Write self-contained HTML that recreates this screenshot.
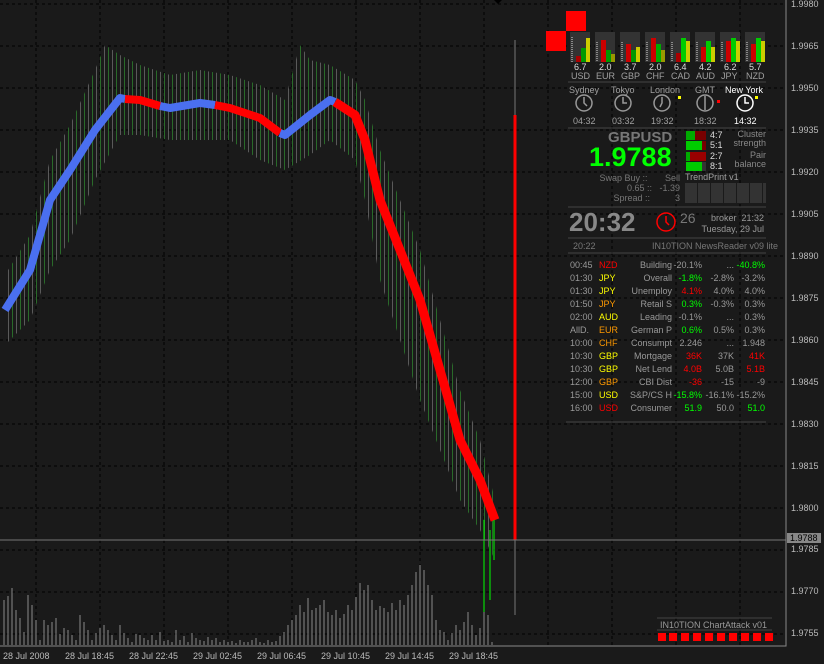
<!DOCTYPE html><html><head><meta charset="utf-8"><style>
body{margin:0;background:#1a1a1a;width:824px;height:664px;overflow:hidden;position:relative;font-family:"Liberation Sans",sans-serif;}
svg{position:absolute;left:0;top:0}
.t{position:absolute;font-size:9px;color:#a0a0a0;white-space:nowrap;line-height:10px}
.r{text-align:right}
</style></head><body>
<svg width="824" height="664">
<defs>
<pattern id="vb" width="8" height="664" patternUnits="userSpaceOnUse">
<rect x="0" y="0" width="1" height="664" fill="#5a5a5a"/><rect x="4" y="0" width="1" height="664" fill="#2a6a2a"/>
</pattern>
</defs>
<g stroke="#000" stroke-dasharray="3 3" stroke-width="1">
<path d="M36 0V646M100 0V646M164 0V646M228 0V646M292 0V646M356 0V646M420 0V646M484 0V646M548 0V646M612 0V646M676 0V646M740 0V646"/>
<path d="M0 4H786M0 46H786M0 88H786M0 130H786M0 172H786M0 214H786M0 256H786M0 298H786M0 340H786M0 382H786M0 424H786M0 466H786M0 508H786M0 550H786M0 592H786M0 634H786"/>
</g>
<path d="M4 645V600M8 645V596M12 645V588M16 645V610M20 645V618M24 645V632M28 645V595M32 645V605M36 645V620M40 645V640M44 645V620M48 645V625M52 645V622M56 645V618M60 645V634M64 645V628M68 645V630M72 645V635M76 645V640M80 645V615M84 645V622M88 645V630M92 645V640M96 645V633M100 645V628M104 645V625M108 645V630M112 645V635M116 645V640M120 645V625M124 645V633M128 645V638M132 645V642M136 645V634M140 645V635M144 645V638M148 645V640M152 645V635M156 645V640M160 645V632M164 645V641M168 645V640M172 645V642M176 645V630M180 645V640M184 645V636M188 645V642M192 645V633M196 645V638M200 645V640M204 645V641M208 645V637M212 645V640M216 645V638M220 645V642M224 645V640M228 645V642M232 645V641M236 645V643M240 645V640M244 645V642M248 645V642M252 645V640M256 645V638M260 645V642M264 645V643M268 645V640M272 645V642M276 645V641M280 645V636M284 645V632M288 645V625M292 645V620M296 645V615M300 645V605M304 645V612M308 645V598M312 645V610M316 645V608M320 645V605M324 645V600M328 645V612M332 645V615M336 645V610M340 645V618M344 645V614M348 645V605M352 645V610M356 645V597M360 645V583M364 645V590M368 645V585M372 645V600M376 645V610M380 645V606M384 645V608M388 645V612M392 645V603M396 645V610M400 645V600M404 645V605M408 645V595M412 645V585M416 645V572M420 645V565M424 645V570M428 645V585M432 645V595M436 645V620M440 645V630M444 645V632M448 645V640M452 645V633M456 645V625M460 645V630M464 645V622M468 645V612M472 645V625M476 645V635M480 645V628M484 645V605M488 645V615M492 645V642" stroke="#8a8a8a" stroke-width="1"/>
<polygon fill="url(#vb)" points="5,275 30,235 50,160 70,125 95,70 105,45 120,55 140,65 170,75 200,70 230,75 260,85 285,100 300,45 310,60 330,65 355,80 365,100 380,150 400,200 420,250 440,320 460,390 480,440 495,500 495,560 480,530 460,500 440,450 420,400 400,340 380,280 365,200 355,160 330,140 310,155 285,170 260,160 230,140 200,140 170,140 140,135 120,135 95,180 70,240 50,270 30,320 5,345"/>
<g fill="none" stroke-linejoin="round">
<polyline points="5,310 30,270 50,200 70,170 95,130 120,98 125,99" stroke="#4a6ff0" stroke-width="8"/>
<polyline points="125,99 140,100 160,106" stroke="#f00" stroke-width="8"/>
<polyline points="160,106 170,108 200,103 215,105" stroke="#4a6ff0" stroke-width="8"/>
<polyline points="215,105 230,108 260,118 280,133" stroke="#f00" stroke-width="8"/>
<polyline points="280,133 285,135 310,115 330,100 335,102" stroke="#4a6ff0" stroke-width="8"/>
<polyline points="335,102 355,115 365,140 380,200 400,250 420,300 440,370 460,440 480,480 495,520" stroke="#f00" stroke-width="9"/>
</g>
<path d="M484 612V520M490 600V530M494 560V520" stroke="#0f0"/>
<path d="M515 40V615" stroke="#777"/>
<path d="M515 115V540" stroke="#f00" stroke-width="3"/>
<path d="M0 540H786" stroke="#777"/>
<path d="M786 0V646H0" stroke="#888" fill="none"/>
<path d="M494 0l4 4 4-4z" fill="#000"/>
<rect x="566" y="11" width="20" height="20" fill="#f00"/><rect x="546" y="31" width="20" height="20" fill="#f00"/>
<path d="M568 82H766M568 128H766M568 207H766M568 238H766M568 253H766M566 422H766M657 618H772M657 630H772" stroke="#444"/>
<g>
<rect x="570" y="32" width="20" height="30" fill="#333"/><rect x="576" y="56" width="5" height="6" fill="#a00"/><rect x="581" y="48" width="5" height="14" fill="#090"/><rect x="586" y="38" width="4" height="24" fill="#cc0"/>
<rect x="595" y="32" width="20" height="30" fill="#333"/><rect x="601" y="40" width="5" height="22" fill="#c00"/><rect x="606" y="50" width="5" height="12" fill="#090"/><rect x="611" y="54" width="4" height="8" fill="#990"/>
<rect x="620" y="32" width="20" height="30" fill="#333"/><rect x="626" y="44" width="5" height="18" fill="#c00"/><rect x="631" y="50" width="5" height="12" fill="#090"/><rect x="636" y="47" width="4" height="15" fill="#cc0"/>
<rect x="645" y="32" width="20" height="30" fill="#333"/><rect x="651" y="38" width="5" height="24" fill="#c00"/><rect x="656" y="44" width="5" height="18" fill="#0a0"/><rect x="661" y="50" width="4" height="12" fill="#990"/>
<rect x="670" y="32" width="20" height="30" fill="#333"/><rect x="676" y="53" width="5" height="9" fill="#a00"/><rect x="681" y="38" width="5" height="24" fill="#0c0"/><rect x="686" y="41" width="4" height="21" fill="#cc0"/>
<rect x="695" y="32" width="20" height="30" fill="#333"/><rect x="701" y="47" width="5" height="15" fill="#c00"/><rect x="706" y="41" width="5" height="21" fill="#0c0"/><rect x="711" y="47" width="4" height="15" fill="#cc0"/>
<rect x="720" y="32" width="20" height="30" fill="#333"/><rect x="726" y="41" width="5" height="21" fill="#c00"/><rect x="731" y="38" width="5" height="24" fill="#0c0"/><rect x="736" y="41" width="4" height="21" fill="#cc0"/>
<rect x="745" y="32" width="20" height="30" fill="#333"/><rect x="751" y="44" width="5" height="18" fill="#c00"/><rect x="756" y="38" width="5" height="24" fill="#0c0"/><rect x="761" y="41" width="4" height="21" fill="#cc0"/>
</g>
<g stroke="#ddd" stroke-dasharray="1 1"><path d="M572 37V62M597 42V62M622 42V62M647 42V62M672 42V62M697 42V62M722 42V62M747 42V62"/></g>
<g fill="none" stroke="#999" stroke-width="1.5">
<circle cx="584" cy="103" r="8"/><circle cx="623" cy="103" r="8"/><circle cx="662" cy="103" r="8"/><circle cx="705" cy="103" r="8"/>
<circle cx="745" cy="103" r="8" stroke="#fff"/>
<path d="M584 97v6l3 3M623 97v6h4M662 97v6l-2 4M705 96v14"/><path d="M745 97v6h4" stroke="#fff"/>
<circle cx="666" cy="222" r="9" stroke="#f00"/><path d="M666 216v6l3 3" stroke="#f00"/>
</g>
<rect x="755" y="96" width="3" height="3" fill="#ff0"/><rect x="678" y="96" width="3" height="3" fill="#ff0"/><rect x="717" y="100" width="3" height="3" fill="#f00"/>
<rect x="686" y="131" width="20" height="9" fill="#700"/><rect x="686" y="131" width="9" height="9" fill="#0a0"/>
<rect x="686" y="141" width="20" height="9" fill="#700"/><rect x="686" y="141" width="16" height="9" fill="#0c0"/>
<rect x="686" y="152" width="20" height="9" fill="#900"/><rect x="686" y="152" width="4" height="9" fill="#0a0"/>
<rect x="686" y="162" width="20" height="9" fill="#333"/><rect x="686" y="162" width="16" height="9" fill="#0c0"/>
<g fill="#333"><rect x="685" y="183" width="12" height="20"/><rect x="698" y="183" width="12" height="20"/><rect x="711" y="183" width="12" height="20"/><rect x="724" y="183" width="12" height="20"/><rect x="737" y="183" width="12" height="20"/><rect x="750" y="183" width="12" height="20"/><rect x="763" y="183" width="3" height="20"/></g>
<g fill="#f00"><rect x="658" y="633" width="8" height="8"/><rect x="669" y="633" width="8" height="8"/><rect x="681" y="633" width="8" height="8"/><rect x="693" y="633" width="8" height="8"/><rect x="705" y="633" width="8" height="8"/><rect x="717" y="633" width="8" height="8"/><rect x="729" y="633" width="8" height="8"/><rect x="741" y="633" width="8" height="8"/><rect x="753" y="633" width="8" height="8"/><rect x="765" y="633" width="8" height="8"/></g>
<rect x="787" y="533" width="34" height="10" fill="#888"/>
</svg>
<div class="t" style="left:791px;top:-1px;color:#bbb">1.9980</div><div class="t" style="left:791px;top:41px;color:#bbb">1.9965</div><div class="t" style="left:791px;top:83px;color:#bbb">1.9950</div><div class="t" style="left:791px;top:125px;color:#bbb">1.9935</div><div class="t" style="left:791px;top:167px;color:#bbb">1.9920</div><div class="t" style="left:791px;top:209px;color:#bbb">1.9905</div><div class="t" style="left:791px;top:251px;color:#bbb">1.9890</div><div class="t" style="left:791px;top:293px;color:#bbb">1.9875</div><div class="t" style="left:791px;top:335px;color:#bbb">1.9860</div><div class="t" style="left:791px;top:377px;color:#bbb">1.9845</div><div class="t" style="left:791px;top:419px;color:#bbb">1.9830</div><div class="t" style="left:791px;top:461px;color:#bbb">1.9815</div><div class="t" style="left:791px;top:503px;color:#bbb">1.9800</div><div class="t" style="left:790px;top:533px;color:#000">1.9788</div><div class="t" style="left:791px;top:544px;color:#bbb">1.9785</div><div class="t" style="left:791px;top:586px;color:#bbb">1.9770</div><div class="t" style="left:791px;top:628px;color:#bbb">1.9755</div>
<div class="t" style="left:3px;top:651px;color:#bbb">28 Jul 2008</div><div class="t" style="left:65px;top:651px;color:#bbb">28 Jul 18:45</div><div class="t" style="left:129px;top:651px;color:#bbb">28 Jul 22:45</div><div class="t" style="left:193px;top:651px;color:#bbb">29 Jul 02:45</div><div class="t" style="left:257px;top:651px;color:#bbb">29 Jul 06:45</div><div class="t" style="left:321px;top:651px;color:#bbb">29 Jul 10:45</div><div class="t" style="left:385px;top:651px;color:#bbb">29 Jul 14:45</div><div class="t" style="left:449px;top:651px;color:#bbb">29 Jul 18:45</div>
<div class="t" style="left:570px;top:62px;width:200px;color:#ddd">
<span style="position:absolute;left:4px">6.7</span><span style="position:absolute;left:29px">2.0</span><span style="position:absolute;left:54px">3.7</span><span style="position:absolute;left:79px">2.0</span><span style="position:absolute;left:104px">6.4</span><span style="position:absolute;left:129px">4.2</span><span style="position:absolute;left:154px">6.2</span><span style="position:absolute;left:179px">5.7</span></div>
<div class="t" style="left:570px;top:71px;width:200px">
<span style="position:absolute;left:1px">USD</span><span style="position:absolute;left:26px">EUR</span><span style="position:absolute;left:51px">GBP</span><span style="position:absolute;left:76px">CHF</span><span style="position:absolute;left:101px">CAD</span><span style="position:absolute;left:126px">AUD</span><span style="position:absolute;left:151px">JPY</span><span style="position:absolute;left:176px">NZD</span></div>
<div class="t" style="left:569px;top:85px">Sydney</div><div class="t" style="left:611px;top:85px">Tokyo</div><div class="t" style="left:650px;top:85px">London</div><div class="t" style="left:695px;top:85px">GMT</div><div class="t" style="left:725px;top:85px;color:#fff">New York</div>
<div class="t" style="left:573px;top:116px">04:32</div><div class="t" style="left:612px;top:116px">03:32</div><div class="t" style="left:651px;top:116px">19:32</div><div class="t" style="left:694px;top:116px">18:32</div><div class="t" style="left:734px;top:116px;color:#fff">14:32</div>
<div class="t" style="left:608px;top:129px;font-size:15px;line-height:17px;font-weight:bold;color:#777">GBPUSD</div>
<div class="t" style="left:589px;top:143px;font-size:27px;line-height:29px;font-weight:bold;color:#0f0">1.9788</div>
<div class="t" style="left:710px;top:130px;color:#ddd">4:7</div><div class="t" style="left:710px;top:140px;color:#ddd">5:1</div><div class="t" style="left:710px;top:151px;color:#ddd">2:7</div><div class="t" style="left:710px;top:161px;color:#ddd">8:1</div>
<div class="t r" style="left:720px;top:130px;width:46px;line-height:9px;color:#888">Cluster<br>strength</div>
<div class="t r" style="left:720px;top:151px;width:46px;line-height:9px;color:#888">Pair<br>balance</div>
<div class="t r" style="left:590px;top:173px;width:90px;line-height:10px;color:#777">Swap Buy ::&nbsp;&nbsp;&nbsp;&nbsp;&nbsp;&nbsp;&nbsp;Sell<br>0.65 ::&nbsp;&nbsp;&nbsp;-1.39<br>Spread ::&nbsp;&nbsp;&nbsp;&nbsp;&nbsp;&nbsp;&nbsp;&nbsp;&nbsp;&nbsp;3</div>
<div class="t" style="left:685px;top:172px">TrendPrint v1</div>
<div class="t" style="left:569px;top:207px;font-size:26px;line-height:30px;font-weight:bold;color:#888">20:32</div>
<div class="t" style="left:680px;top:211px;font-size:14px;line-height:14px;color:#777">26</div>
<div class="t r" style="left:690px;top:213px;width:74px;line-height:11px;color:#999">broker&nbsp; 21:32<br>Tuesday, 29 Jul</div>
<div class="t" style="left:573px;top:241px;color:#777">20:22</div><div class="t" style="left:652px;top:241px;color:#777">IN10TION NewsReader v09 lite</div>
<div class="t" style="left:570px;top:259px;line-height:13px;color:#999">00:45<br>01:30<br>01:30<br>01:50<br>02:00<br>AllD.<br>10:00<br>10:30<br>10:30<br>12:00<br>15:00<br>16:00</div>
<div class="t" style="left:599px;top:259px;line-height:13px"><span style="color:#f00">NZD</span><br><span style="color:#ff0">JPY</span><br><span style="color:#ff0">JPY</span><br><span style="color:#f90">JPY</span><br><span style="color:#ff0">AUD</span><br><span style="color:#f90">EUR</span><br><span style="color:#f90">CHF</span><br><span style="color:#ff0">GBP</span><br><span style="color:#ff0">GBP</span><br><span style="color:#f90">GBP</span><br><span style="color:#ff0">USD</span><br><span style="color:#f00">USD</span></div>
<div class="t r" style="left:620px;top:259px;width:52px;line-height:13px;color:#999">Building<br>Overall<br>Unemploy<br>Retail S<br>Leading<br>German P<br>Consumpt<br>Mortgage<br>Net Lend<br>CBI Dist<br>S&amp;P/CS H<br>Consumer</div>
<div class="t r" style="left:672px;top:259px;width:30px;line-height:13px;color:#999">-20.1%<br><span style="color:#0f0">-1.8%</span><br><span style="color:#f00">4.1%</span><br><span style="color:#0f0">0.3%</span><br>-0.1%<br><span style="color:#0f0">0.6%</span><br>2.246<br><span style="color:#f00">36K</span><br><span style="color:#f00">4.0B</span><br><span style="color:#f00">-36</span><br><span style="color:#0f0">-15.8%</span><br><span style="color:#0f0">51.9</span></div>
<div class="t r" style="left:702px;top:259px;width:32px;line-height:13px;color:#999">...<br>-2.8%<br>4.0%<br>-0.3%<br>...<br>0.5%<br>...<br>37K<br>5.0B<br>-15<br>-16.1%<br>50.0</div>
<div class="t r" style="left:734px;top:259px;width:31px;line-height:13px;color:#999"><span style="color:#0f0">-40.8%</span><br>-3.2%<br>4.0%<br>0.3%<br>0.3%<br>0.3%<br>1.948<br><span style="color:#f00">41K</span><br><span style="color:#f00">5.1B</span><br>-9<br>-15.2%<br><span style="color:#0f0">51.0</span></div>
<div class="t" style="left:660px;top:620px;color:#999">IN10TION ChartAttack v01</div>
</body></html>
